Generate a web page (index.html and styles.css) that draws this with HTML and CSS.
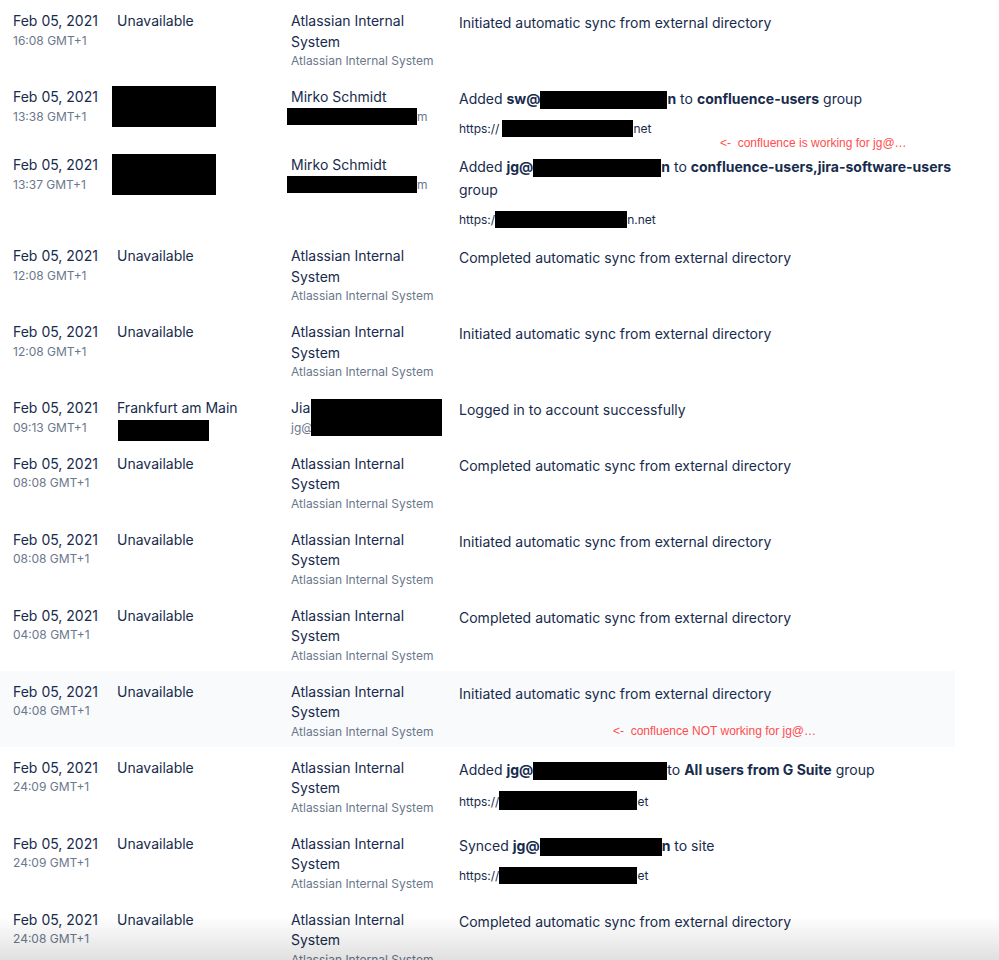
FILE: index.html
```html
<!DOCTYPE html>
<html lang="en">
<head>
<meta charset="utf-8">
<title>Audit log</title>
<link rel="stylesheet" href="styles.css">
</head>
<body>
<div class="log">
  <div class="note note-top">&lt;-&nbsp; confluence is working for jg@…</div>

  <div class="row">
    <div class="cell"><div class="main">Feb 05, 2021</div><div class="sub">16:08 GMT+1</div></div>
    <div class="cell"><div class="main">Unavailable</div></div>
    <div class="cell user"><div class="main">Atlassian Internal System</div><div class="sub">Atlassian Internal System</div></div>
    <div class="cell action"><div class="text">Initiated automatic sync from external directory</div></div>
  </div>

  <div class="row">
    <div class="cell"><div class="main">Feb 05, 2021</div><div class="sub">13:38 GMT+1</div></div>
    <div class="cell"><div class="block-redact"></div></div>
    <div class="cell user"><div class="main">Mirko Schmidt</div><div class="sub"><span class="redact r-email"></span>m</div></div>
    <div class="cell action">
      <div class="text">Added <b>sw@<span class="redact r-act" style="width:127px"></span>n</b> to <b>confluence-users</b> group</div>
      <div class="link">https://<span class="redact r-link r-shift" style="width:131px"></span>net</div>
    </div>
  </div>

  <div class="row">
    <div class="cell"><div class="main">Feb 05, 2021</div><div class="sub">13:37 GMT+1</div></div>
    <div class="cell"><div class="block-redact"></div></div>
    <div class="cell user"><div class="main">Mirko Schmidt</div><div class="sub"><span class="redact r-email"></span>m</div></div>
    <div class="cell action">
      <div class="text">Added <b>jg@<span class="redact r-act" style="width:128px"></span>n</b> to <b>confluence-users,jira-software-users</b> group</div>
      <div class="link">https:/<span class="redact r-link" style="width:132px"></span>n.net</div>
    </div>
  </div>

  <div class="row">
    <div class="cell"><div class="main">Feb 05, 2021</div><div class="sub">12:08 GMT+1</div></div>
    <div class="cell"><div class="main">Unavailable</div></div>
    <div class="cell user"><div class="main">Atlassian Internal System</div><div class="sub">Atlassian Internal System</div></div>
    <div class="cell action"><div class="text">Completed automatic sync from external directory</div></div>
  </div>

  <div class="row">
    <div class="cell"><div class="main">Feb 05, 2021</div><div class="sub">12:08 GMT+1</div></div>
    <div class="cell"><div class="main">Unavailable</div></div>
    <div class="cell user"><div class="main">Atlassian Internal System</div><div class="sub">Atlassian Internal System</div></div>
    <div class="cell action"><div class="text">Initiated automatic sync from external directory</div></div>
  </div>

  <div class="row">
    <div class="cell"><div class="main">Feb 05, 2021</div><div class="sub">09:13 GMT+1</div></div>
    <div class="cell"><div class="main">Frankfurt am Main</div><div class="ip-redact"></div></div>
    <div class="cell user"><div class="main">Jia</div><div class="sub">jg@</div><div class="name-redact"></div></div>
    <div class="cell action"><div class="text">Logged in to account successfully</div></div>
  </div>

  <div class="row">
    <div class="cell"><div class="main">Feb 05, 2021</div><div class="sub">08:08 GMT+1</div></div>
    <div class="cell"><div class="main">Unavailable</div></div>
    <div class="cell user"><div class="main">Atlassian Internal System</div><div class="sub">Atlassian Internal System</div></div>
    <div class="cell action"><div class="text">Completed automatic sync from external directory</div></div>
  </div>

  <div class="row">
    <div class="cell"><div class="main">Feb 05, 2021</div><div class="sub">08:08 GMT+1</div></div>
    <div class="cell"><div class="main">Unavailable</div></div>
    <div class="cell user"><div class="main">Atlassian Internal System</div><div class="sub">Atlassian Internal System</div></div>
    <div class="cell action"><div class="text">Initiated automatic sync from external directory</div></div>
  </div>

  <div class="row">
    <div class="cell"><div class="main">Feb 05, 2021</div><div class="sub">04:08 GMT+1</div></div>
    <div class="cell"><div class="main">Unavailable</div></div>
    <div class="cell user"><div class="main">Atlassian Internal System</div><div class="sub">Atlassian Internal System</div></div>
    <div class="cell action"><div class="text">Completed automatic sync from external directory</div></div>
  </div>

  <div class="row hover">
    <div class="cell"><div class="main">Feb 05, 2021</div><div class="sub">04:08 GMT+1</div></div>
    <div class="cell"><div class="main">Unavailable</div></div>
    <div class="cell user"><div class="main">Atlassian Internal System</div><div class="sub">Atlassian Internal System</div></div>
    <div class="cell action">
      <div class="text">Initiated automatic sync from external directory</div>
      <div class="note note-inline">&lt;-&nbsp; confluence NOT working for jg@…</div>
    </div>
  </div>

  <div class="row">
    <div class="cell"><div class="main">Feb 05, 2021</div><div class="sub">24:09 GMT+1</div></div>
    <div class="cell"><div class="main">Unavailable</div></div>
    <div class="cell user"><div class="main">Atlassian Internal System</div><div class="sub">Atlassian Internal System</div></div>
    <div class="cell action">
      <div class="text">Added <b>jg@<span class="redact r-act" style="width:134px"></span></b>to <b>All users from G Suite</b> group</div>
      <div class="link">https://<span class="redact r-link r-tall" style="width:138px"></span>et</div>
    </div>
  </div>

  <div class="row">
    <div class="cell"><div class="main">Feb 05, 2021</div><div class="sub">24:09 GMT+1</div></div>
    <div class="cell"><div class="main">Unavailable</div></div>
    <div class="cell user"><div class="main">Atlassian Internal System</div><div class="sub">Atlassian Internal System</div></div>
    <div class="cell action">
      <div class="text">Synced <b>jg@<span class="redact r-act" style="width:122px"></span>n</b> to site</div>
      <div class="link">https://<span class="redact r-link" style="width:138px"></span>et</div>
    </div>
  </div>

  <div class="row">
    <div class="cell"><div class="main">Feb 05, 2021</div><div class="sub">24:08 GMT+1</div></div>
    <div class="cell"><div class="main">Unavailable</div></div>
    <div class="cell user"><div class="main">Atlassian Internal System</div><div class="sub">Atlassian Internal System</div></div>
    <div class="cell action"><div class="text">Completed automatic sync from external directory</div></div>
  </div>
</div>
<div class="fade"></div>
</body>
</html>
```

FILE: styles.css
```css
html, body {
  margin: 0;
  padding: 0;
  overflow: hidden;
  background: #ffffff;
}

body {
  font-family: Inter, "Noto Sans", sans-serif;
  color: #172b4d;
  font-size: 14px;
}

.log {
  position: relative;
  width: 955px;
}

.row {
  display: grid;
  grid-template-columns: 104px 174px 168px 1fr;
  padding: 11px 0 6px 13px;
}

.row.hover {
  background: #f9fafb;
}

.cell {
  position: relative;
  padding-right: 16px;
  min-width: 0;
}

.cell.action {
  padding-right: 0;
  margin-right: -24px;
}

.main {
  font-size: 14px;
  line-height: 20.5px;
}

.sub {
  font-size: 12px;
  line-height: 18px;
  color: #6b778c;
}

.action .text {
  font-size: 14px;
  line-height: 23px;
}

.action b {
  font-weight: 700;
}

.link {
  font-size: 12px;
  line-height: 18px;
  margin-top: 10px;
}

.redact {
  display: inline-block;
  background: #000;
}

.r-email {
  width: 130px;
  height: 17px;
  margin-left: -4px;
  vertical-align: -4px;
}

.r-act {
  height: 18px;
  vertical-align: -5px;
}

.r-link {
  height: 17px;
  vertical-align: -4px;
}

.r-shift {
  margin-left: 3px;
}

.r-tall {
  height: 19px;
}

.block-redact {
  width: 104px;
  height: 41px;
  margin: -1px 0 0 -5px;
  background: #000;
}

.ip-redact {
  width: 91px;
  height: 21px;
  margin: 1px 0 -5px 1px;
  background: #000;
}

.name-redact {
  position: absolute;
  top: 1px;
  left: 20px;
  width: 131px;
  height: 37px;
  background: #000;
}

.note {
  font-family: "Liberation Sans", Arial, sans-serif;
  font-size: 12px;
  line-height: 16px;
  color: #ff4d4d;
  white-space: nowrap;
}

.note-top {
  position: absolute;
  top: 135px;
  left: 720px;
}

.note-inline {
  margin: 18px 0 0 154px;
}

.fade {
  position: fixed;
  left: 0;
  right: 0;
  bottom: 0;
  height: 44px;
  pointer-events: none;
  background: linear-gradient(to bottom, rgba(0, 0, 0, 0), rgba(0, 0, 0, 0.12));
}
```
